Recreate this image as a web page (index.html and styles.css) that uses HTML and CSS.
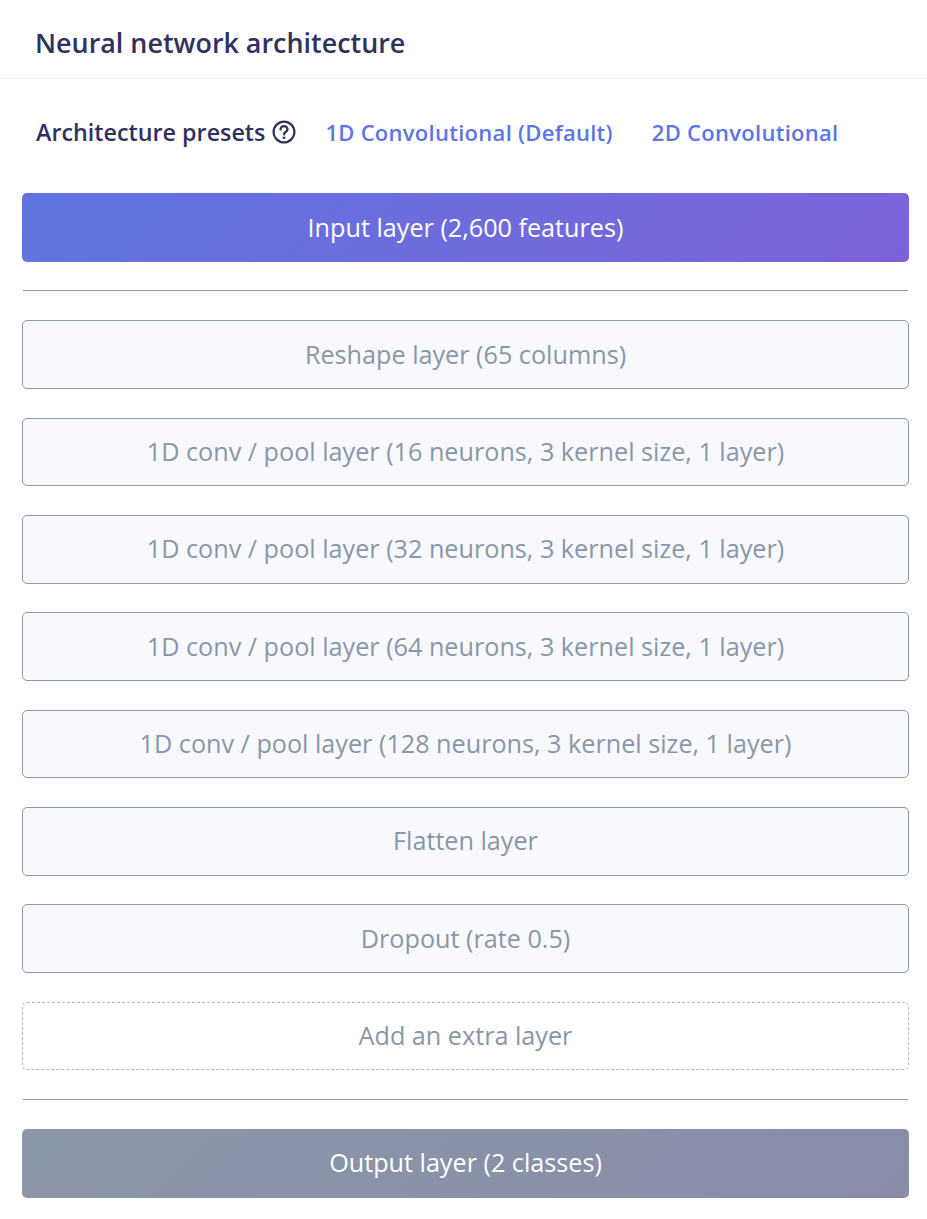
FILE: index.html
```html
<!DOCTYPE html>
<html lang="en">

<head>
    <meta charset="UTF-8">
    <meta name="viewport" content="width=device-width, initial-scale=1.0">
    <title>Neural network architecture</title>
    <link rel="stylesheet" href="styles.css">
</head>

<body>
    <div class="card-header">
        <h1>Neural network architecture</h1>
    </div>
    <div class="card-body">
        <div class="presets">
            <span class="presets-label">Architecture presets</span>
            <svg class="help-icon" viewBox="0 0 24 24" width="24" height="24" aria-hidden="true">
                <circle cx="12" cy="12" r="10.4" fill="none" stroke="#2f3160" stroke-width="2.2"></circle>
                <path d="M8.5 9.6a3.5 3.5 0 0 1 7 0c0 2.4-3.5 2.5-3.5 4.8" fill="none" stroke="#2f3160" stroke-width="2.3" stroke-linecap="round"></path>
                <circle cx="12" cy="17.8" r="1.4" fill="#2f3160"></circle>
            </svg>
            <a class="preset-link" href="#">1D Convolutional (Default)</a>
            <a class="preset-link" href="#">2D Convolutional</a>
        </div>

        <div class="layer layer-input">Input layer (2,600 features)</div>
        <hr class="divider">
        <div class="layer">Reshape layer (65 columns)</div>
        <div class="layer">1D conv / pool layer (16 neurons, 3 kernel size, 1 layer)</div>
        <div class="layer">1D conv / pool layer (32 neurons, 3 kernel size, 1 layer)</div>
        <div class="layer">1D conv / pool layer (64 neurons, 3 kernel size, 1 layer)</div>
        <div class="layer">1D conv / pool layer (128 neurons, 3 kernel size, 1 layer)</div>
        <div class="layer">Flatten layer</div>
        <div class="layer">Dropout (rate 0.5)</div>
        <div class="layer layer-add">Add an extra layer</div>
        <hr class="divider">
        <div class="layer layer-output">Output layer (2 classes)</div>
    </div>
</body>

</html>
```

FILE: styles.css
```css
body {
    font-family: "Open Sans", "Noto Sans", sans-serif;
    background-color: #ffffff;
    margin: 0;
    padding: 0;
}

.card-header {
    height: 79px;
    padding: 6px 35px 0;
    display: flex;
    align-items: center;
    border-bottom: 1px solid #eff0f3;
    box-sizing: border-box;
}

h1 {
    margin: 0;
    font-size: 26.9px;
    font-weight: 600;
    color: #2f3160;
}

.card-body {
    padding: 0 18px 0 22px;
    display: flex;
    flex-direction: column;
    gap: 28.65px;
}

.presets {
    height: 114px;
    margin-bottom: -28.65px;
    padding-left: 14px;
    padding-bottom: 8px;
    box-sizing: border-box;
    display: flex;
    align-items: center;
    color: #2f3160;
}

.presets-label {
    font-size: 23.3px;
    font-weight: 600;
}

.help-icon {
    margin-left: 7px;
    margin-right: 29px;
}

.preset-link {
    margin-right: 39px;
    font-size: 22px;
    letter-spacing: 0.28px;
    font-weight: 600;
    color: #5c75e3;
    text-decoration: none;
}

.layer {
    height: 68.7px;
    padding-bottom: 2px;
    box-sizing: border-box;
    display: flex;
    align-items: center;
    justify-content: center;
    font-size: 25.2px;
    color: #8996a8;
    background-color: #f8f9fc;
    border: 1px solid #8a9ab0;
    border-radius: 5px;
}

.layer-input {
    padding-bottom: 0;
    color: #ffffff;
    border: none;
    background: linear-gradient(135deg, #5f75e0, #7d62da);
}

.layer-output {
    color: #ffffff;
    border: none;
    background: linear-gradient(135deg, #8b98a9, #888ca8);
}

.layer-add {
    background-color: #ffffff;
    border: 1px dashed #b5b8bd;
}

.divider {
    height: 1px;
    margin: 0 1px 0.3px;
    border: none;
    background-color: #8a9ab0;
}
```
